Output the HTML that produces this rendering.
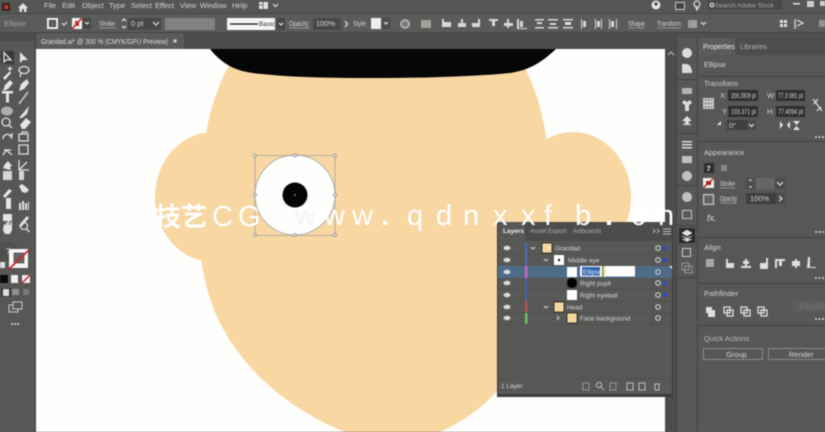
<!DOCTYPE html>
<html><head><meta charset="utf-8"><style>
html,body{margin:0;padding:0;width:825px;height:432px;overflow:hidden;background:#575755}
svg{display:block;position:absolute;left:0;top:0;filter:blur(.45px)}
text{font-family:"Liberation Sans","Noto Sans CJK SC",sans-serif;font-size:7.5px;fill:#d4d4d2}
.w{font-size:29px;fill:#fff}
.d{fill:#2f2f2e}.i{fill:#e2e2e0}.s{fill:none;stroke:#e2e2e0;stroke-width:1.2}
.f{fill:#3f3f3d}
</style></head><body>
<svg width="825" height="432" viewBox="0 0 825 432" xmlns="http://www.w3.org/2000/svg">
<rect width="825" height="432" fill="#575755"/>
<!-- canvas -->
<rect x="36" y="49" width="630" height="383" fill="#fefefd"/>
<g fill="#f8d7a3">
<ellipse cx="213" cy="197" rx="58" ry="65"/><ellipse cx="573" cy="197" rx="58" ry="65"/>
<path d="M238 49C222 75 210 105 205 140C198 190 195 240 205 280C215 330 255 395 345 432L440 432C490 410 520 370 540 320C555 270 555 190 545 130C540 100 530 75 515 49Z"/>
</g>
<path d="M210 49C224 66 237 72 262 74C300 78 340 78 380 78C430 78 480 76 510 73C530 70 542 62 556 49Z" fill="#060606"/>
<!-- eye -->
<circle cx="295" cy="195" r="40" fill="#fefefd" stroke="#9a9aa0" stroke-width=".7"/>
<circle cx="295" cy="195" r="12.5" fill="#050505"/><circle cx="295" cy="195" r="1" fill="#5a7fd0"/>
<rect x="255" y="155.500" width="80" height="80" fill="none" stroke="#9a9aa8" stroke-width=".7"/>
<g fill="#eee" stroke="#8a8a9a" stroke-width=".7"><circle cx="255" cy="155.500" r="1.500"/><circle cx="295" cy="155.500" r="1.500"/><circle cx="335" cy="155.500" r="1.500"/><circle cx="255" cy="195" r="1.500"/><circle cx="335" cy="195" r="1.500"/><circle cx="255" cy="235" r="1.500"/><circle cx="295" cy="235" r="1.500"/><circle cx="335" cy="235" r="1.500"/></g>
<!-- top bars -->
<rect width="825" height="13" fill="#555553"/>
<rect y="13" width="825" height="1" fill="#484846"/>
<rect y="14" width="825" height="19" fill="#5b5b59"/>
<rect y="32" width="825" height="1" fill="#434341"/>
<rect y="33" width="825" height="16" fill="#4c4c4a"/>
<rect x="36" y="33" width="148" height="16" fill="#5b5b59"/>
<rect y="33" width="36" height="399" fill="#575755"/>
<rect x="35" y="33" width="1" height="399" fill="#424240"/>
<rect x="2" y="3" width="8" height="8" fill="#3a2320"/><rect x="4.500" y="5" width="3.500" height="4" fill="#c4372c"/>
<path d="M18 8L23 3L28 8H26.500V12H24V9H22V12H19.500V8Z" class="i"/>
<text x="44" y="8">File</text><text x="62" y="8">Edit</text><text x="82" y="8">Object</text><text x="109" y="8">Type</text><text x="131" y="8">Select</text><text x="155" y="8">Effect</text><text x="180" y="8">View</text><text x="200" y="8">Window</text><text x="232" y="8">Help</text>
<path d="M259 2h9v7h-9z" class="i"/><path d="M263 2v7M259 5h4" stroke="#555" stroke-width=".8"/><path d="M273 4l2.500 2.500L278 4" class="s"/>
<!-- control -->
<text x="4" y="26" style="fill:#a4a4a2">Ellipse</text>
<rect x="47" y="18" width="11" height="11" fill="#eee"/><rect x="49.500" y="20.500" width="6" height="6" fill="#666" stroke="#222" stroke-width=".8"/>
<path d="M62 23l2 2 3-3" class="s"/>
<rect x="72" y="18" width="10" height="11" fill="#eee"/><path d="M72 29L82 18" stroke="#c22" stroke-width="1.600"/><rect x="75" y="21" width="4" height="5" fill="#b33"/>
<rect x="83" y="18" width="8" height="11" fill="#484846"/><path d="M85 22l2 2 2-2" class="s"/>
<text x="99" y="26" textLength="17" lengthAdjust="spacingAndGlyphs">Stroke:</text><path d="M99 28h17" stroke="#ccc" stroke-width=".5"/>
<path d="M122 21l2-2 2 2M122 26l2 2 2-2" class="s"/>
<rect x="128" y="18" width="33" height="12" fill="#484846"/><text x="131" y="26">0 pt</text><path d="M153 22l3 3 3-3" class="s"/>
<rect x="165" y="18" width="50" height="12" fill="#828280"/>
<rect x="227" y="18" width="48" height="12" fill="#f5f5f3"/><path d="M230 24h28" stroke="#111" stroke-width="1.300"/><text x="259" y="26" style="fill:#333;font-size:6.500px">Basic</text>
<rect x="277" y="18" width="8" height="12" fill="#484846"/><path d="M279 23l2 2 2-2" class="s"/>
<text x="289" y="26" textLength="21" lengthAdjust="spacingAndGlyphs">Opacity:</text><path d="M289 28h21" stroke="#ccc" stroke-width=".5"/>
<rect x="313" y="18" width="28" height="12" fill="#484846"/><text x="316" y="26">100%</text><path d="M345 21l2.500 3-2.500 3" class="s"/>
<text x="353" y="26" textLength="14" lengthAdjust="spacingAndGlyphs">Style:</text>
<rect x="371" y="18" width="10" height="11" fill="#eee"/><rect x="382" y="18" width="8" height="11" fill="#4b4b49"/><path d="M384 22l2 2 2-2" class="s"/>
<circle cx="405" cy="24" r="5" fill="#aaa"/><circle cx="405" cy="24" r="2.800" fill="#777"/>
<g fill="#d8d8d6"><rect x="421" y="20" width="10" height="8" opacity=".55"/>
<path d="M442 19h2v3h7v5h-9zM458 23h3v-4h2v4h3v4h-8zM472 23h6v-4h2v8h-8z"/>
<path d="M489 19h9v2h-3v5h-3v-5h-3zM504 23h3v-4h2v4h4v3h-4v2h-2v-2h-3zM517 19h2v9h8v1h-10zM520 21h3v6h-3z"/>
<path d="M535 19h9v1.500h-9zM537 22h5v2h-5zM535 27h9v1.500h-9zM548 19h10v1.500h-10zM550 23h6v2h-6zM548 27h10v1.500h-10zM563 19h10v1.500h-10zM565 22h6v3h-6zM563 27h10v1.500h-10z"/>
<path d="M581 19h1v10h-1zM583 21h3v6h-3zM595 19h1v10h-1zM597 21h3v6h-3zM601 19h1v10h-1zM609 19h1v10h-1zM611 21h3v6h-3zM616 19h1v10h-1z"/></g>
<text x="628" y="26" textLength="17" lengthAdjust="spacingAndGlyphs">Shape</text><path d="M628 28h17" stroke="#ccc" stroke-width=".5"/>
<text x="657" y="26" textLength="24" lengthAdjust="spacingAndGlyphs">Transform</text><path d="M657 28h24" stroke="#ccc" stroke-width=".5"/>
<rect x="688" y="20" width="9" height="8" fill="#bbb" opacity=".7"/><path d="M701 22l2.500 2.500 2.500-2.500" class="s"/>
<rect x="780" y="20" width="7" height="7" fill="#e2e2e0"/><path d="M783.500 20v7M780 23.500h7" stroke="#555"/>
<path d="M795 19v10M797 20l6 3-6 3" class="s"/><rect x="819" y="20" width="6" height="7" fill="#bbb" opacity=".6"/>
<!-- top right -->
<circle cx="656" cy="5" r="4.500" class="i"/><circle cx="656" cy="4" r="1.700" fill="#555"/>
<rect x="675.500" y="2.500" width="9" height="7" fill="#444" stroke="#ccc"/>
<circle cx="697" cy="4" r="3" class="s"/><path d="M695.500 7l1.500 3 1.500-3" class="s"/>
<rect x="708" y="0" width="74" height="9.500" fill="#484846"/><text x="715" y="7.500" style="font-size:6.500px;fill:#a8a8a6">Search Adobe Stock</text><circle cx="712" cy="5" r="1.800" class="s"/>
<rect x="793" y="3" width="7" height="1.500" class="i"/><rect x="807" y="1" width="7" height="6" fill="#ccc"/><rect x="820" y="1" width="5" height="5" fill="#ccc"/>
<text x="41" y="44" textLength="127" lengthAdjust="spacingAndGlyphs" style="fill:#dededc">Grandad.ai* @ 300 % (CMYK/GPU Preview)</text><path d="M173.500 39.500l3 3M176.500 39.500l-3 3" class="s"/>
<!-- right side -->
<rect x="665" y="49" width="11" height="383" fill="#4d4d4b"/>
<path d="M668 55l3-3 3 3" class="s" style="stroke-width:.8"/>
<rect x="676" y="33" width="149" height="399" fill="#575755"/>
<rect x="676" y="33" width="149" height="5" fill="#4f4f4d"/>
<rect x="697" y="38" width="1" height="394" fill="#434341"/><rect x="676" y="38" width="1" height="394" fill="#434341"/>
<rect x="698" y="38" width="127" height="17" fill="#4d4d4b"/><rect x="698" y="38" width="37" height="17" fill="#5b5b59"/>
<text x="703" y="49" style="fill:#efefed;font-size:7px">Properties</text><text x="740" y="49" style="font-size:7px;fill:#b5b5b3">Libraries</text>
<text x="704" y="67">Ellipse</text>
<g fill="#414140"><rect x="698" y="76" width="127" height="1"/><rect x="698" y="141" width="127" height="1"/><rect x="698" y="237" width="127" height="1"/><rect x="698" y="283" width="127" height="1"/><rect x="698" y="325" width="127" height="1"/>
<rect x="677" y="79" width="20" height="1"/><rect x="677" y="133" width="20" height="1"/><rect x="677" y="185" width="20" height="1"/><rect x="677" y="225" width="20" height="1"/><rect x="677" y="277" width="20" height="1"/></g>
<text x="704" y="86">Transform</text>
<rect x="703" y="98" width="11" height="11" fill="#c4c4c2"/><path d="M705 100h7M705 103.500h7M705 107h7" stroke="#555" stroke-dasharray="1.500 1.500"/>
<text x="720" y="98">X:</text><text x="722" y="114">Y:</text><text x="767" y="98">W:</text><text x="767" y="114">H:</text>
<rect x="728" y="90" width="30" height="11" class="d"/><rect x="728" y="106" width="30" height="11" class="d"/><rect x="776" y="90" width="29" height="11" class="d"/><rect x="776" y="106" width="29" height="11" class="d"/>
<text x="731" y="98" textLength="25" lengthAdjust="spacingAndGlyphs">358.2809 pt</text><text x="731" y="114" textLength="25" lengthAdjust="spacingAndGlyphs">103.371 pt</text><text x="778" y="98" textLength="25" lengthAdjust="spacingAndGlyphs">77.3 081 pt</text><text x="778" y="114" textLength="25" lengthAdjust="spacingAndGlyphs">77.4094 pt</text>
<path d="M813 99l9 12M814 104l4-5M817 111l4-4" class="s"/>
<path d="M717 125l4-4v4z" class="i"/><rect x="727" y="120" width="20" height="10" class="f"/><text x="729" y="128">0°</text><rect x="747" y="120" width="9" height="10" fill="#4b4b49"/><path d="M749 124l2.500 2.500 2.500-2.500" class="s"/>
<path d="M780 121v8l3-4zM790 121v8l-3-4zM793 121h7l-3.500 4zM793 130h7l-3.500-4z" class="i"/>
<text x="704" y="155">Appearance</text>
<rect x="704" y="163" width="10" height="10" fill="#2e2e2d"/><text x="706.500" y="171" style="fill:#eee;font-weight:700">7</text><rect x="721" y="165" width="6" height="6" fill="#888"/>
<rect x="703" y="178" width="11" height="10" fill="#eee"/><path d="M703 188L714 178" stroke="#c22" stroke-width="1.500"/><rect x="706" y="181" width="5" height="4" fill="#a22"/>
<text x="720" y="186" textLength="15" lengthAdjust="spacingAndGlyphs">Stroke</text><path d="M720 188h15" stroke="#ccc" stroke-width=".5"/>
<rect x="746" y="178" width="9" height="11" fill="#4b4b49"/><path d="M749 181l1.500-1.500 1.500 1.500M749 186l1.500 1.500 1.500-1.500" class="s" style="stroke-width:.8"/><rect x="756" y="178" width="19" height="11" fill="#666664"/><rect x="775" y="178" width="10" height="11" fill="#4b4b49"/><path d="M777 182l3 3 3-3" class="s"/>
<rect x="703.500" y="194.500" width="10" height="10" fill="#777" stroke="#ccc"/><rect x="706" y="197" width="5" height="5" fill="#666" stroke="#444" stroke-width=".6"/>
<text x="720" y="201" textLength="17" lengthAdjust="spacingAndGlyphs">Opacity</text><path d="M720 203h17" stroke="#ccc" stroke-width=".5"/>
<rect x="746" y="193" width="30" height="11" class="f"/><text x="750" y="201">100%</text><rect x="776" y="193" width="9" height="11" fill="#4b4b49"/><path d="M779 196l3 2.500-3 2.500" class="s"/>
<text x="707" y="221" style="font-style:italic;font-size:9px;fill:#ddd">fx.</text>
<g fill="#d8d8d6"><circle cx="816" cy="137" r="1"/><circle cx="819.500" cy="137" r="1"/><circle cx="823" cy="137" r="1"/><circle cx="816" cy="232" r="1"/><circle cx="819.500" cy="232" r="1"/><circle cx="823" cy="232" r="1"/><circle cx="816" cy="278" r="1"/><circle cx="819.500" cy="278" r="1"/><circle cx="823" cy="278" r="1"/><circle cx="816" cy="319" r="1"/><circle cx="819.500" cy="319" r="1"/><circle cx="823" cy="319" r="1"/></g>
<text x="704" y="250" style="font-style:italic">Align</text>
<g fill="#dededc"><rect x="706" y="259" width="8" height="8" opacity=".6"/><path d="M726 259h2v4h6v5h-8zM743 261h2v-2h2v2h2v3h-2v2h4v2h-10v-2h4v-2h-2v-2zM760 263h6v-5h2v11h-8zM775 259h10v2h-3v5h-3v-5h-2v7h-2zM792 261h3v-2h2v2h3v5h-3v2h-2v-2h-3zM808 257h2v10h6v1h-9z"/></g>
<text x="704" y="296">Pathfinder</text>
<g fill="#dededc"><path d="M706 307h6v3h3v7h-7v-4h-2z"/></g>
<g fill="none" stroke="#dededc" stroke-width="1.300"><rect x="724" y="307" width="6" height="6"/><rect x="727" y="310" width="6" height="6"/><rect x="741" y="307" width="6" height="6"/><rect x="744" y="310" width="6" height="6"/><rect x="758" y="307" width="6" height="6"/><rect x="761" y="310" width="6" height="6"/></g>
<rect x="792" y="301" width="33" height="11" fill="#5e5e5c"/><text x="799" y="309" style="fill:#777775">Expand</text>
<text x="704" y="341" style="fill:#bdbdbb">Quick Actions</text>
<rect x="703.500" y="348.500" width="59" height="11" fill="none" stroke="#8a8a88"/><text x="726" y="357">Group</text>
<rect x="768.500" y="348.500" width="60" height="11" fill="none" stroke="#8a8a88"/><text x="789" y="357">Render</text>
<!-- icon col -->
<g fill="#dcdcda"><circle cx="687" cy="53" r="5"/><path d="M682 64h4c4 0 6 4 6 9h-10z"/><rect x="682" y="88" width="10" height="6" opacity=".7"/><path d="M684 100l3 2 3-2 2 3-3 2v6h-4v-6l-3-2zM687 116l5 5h-3v3h2v1h-8v-1h2v-3h-3z"/><rect x="682" y="141" width="10" height="1.500"/><rect x="682" y="144" width="10" height="1.500"/><rect x="682" y="147" width="10" height="1.500"/><rect x="682" y="156" width="10" height="7" opacity=".8"/><circle cx="687" cy="176" r="5" opacity=".8"/><circle cx="687" cy="197" r="5" opacity=".8"/></g>
<rect x="682.500" y="210.500" width="9" height="8" fill="none" stroke="#ccc"/>
<rect x="679" y="228" width="16" height="15" fill="#2b2b2a"/><path d="M687 230l5 3-5 3-5-3zM682 236l5 3 5-3-5 2zM682 239l5 2.500 5-2.500" class="i" stroke="#e8e8e6" stroke-width=".5"/>
<rect x="682.500" y="248.500" width="8" height="8" fill="none" stroke="#ccc"/><rect x="682" y="263" width="7" height="7" fill="none" stroke="#999"/><rect x="685" y="266" width="7" height="7" fill="none" stroke="#999"/>
<!-- tools -->
<rect x="0" y="33" width="35" height="8" fill="#4c4c4a"/>
<rect x="1" y="51" width="13" height="13" fill="#393937"/>
<g fill="#e4e4e2">
<path d="M20 52V63L23 60L28 60Z"/>
<path d="M10 71l1 2-6 7-2-2zM10 66l1 2 2 .5-2 1-1 2-1-2-2-1 2-.5z"/>
<path d="M3 91L5 85L10 80L13 83L8 89Z"/><path d="M19 91L21 84L27 79L29 83L24 89Z"/>
<path d="M2 91h11v2.500h-4v9h-3v-9h-4z"/>
<path d="M19 118L29 106L27 114L22 118Z"/>
<path d="M20 125L26 118L31 122L25 129H22Z"/>
<path d="M3 155l3-4h5l1 4-3 2zM20 156V145l4 3h4v8z" opacity="0"/>
<path d="M3 168l2-4 3-3 4 5-2 1 1 3-5-1z"/>
<path d="M4 186V172h9v8h-4v6z" opacity="0"/>
<path d="M3 180v-9h9v9z" opacity=".85"/><path d="M19 171h5v9h-5z" opacity=".9"/>
<path d="M3 196l6-7 3 2-7 7zM19 186l3-2 4 3 3 3-3 3-4-1z"/>
<path d="M6 198h5v11H6zM19 210v-7h2v7zM22 210v-9h2v9zM25 210v-7h2v7zM28 210v-8h1v8z"/>
<path d="M3 214h9v7H3zM20 224l7-8 2 2-7 8-3 1z"/>
<path d="M3 230l1-6 2 1V222h1.500v3H8v-4h1.500v4h1v-3H12v8l-2 4H5z"/>
</g>
<ellipse cx="7" cy="111" rx="6" ry="4.500" fill="#b0b0ae"/>
<g fill="none" stroke="#e0e0de" stroke-width="1.300">
<path d="M4 52.500V62L7 59.500L11 60Z"/>
<ellipse cx="24" cy="70" rx="5" ry="3.500"/><path d="M21 73l-1 4"/>
<path d="M19 104L28 92" />
<circle cx="6" cy="122" r="4"/><path d="M9 125l3 3"/>
<path d="M3 139a4.500 4.500 0 0 1 8-3l1 3M12 133v3h-3"/>
<path d="M19 134h9v7h-9zM22 134v-2h6"/>
<path d="M19 145h9v9h-9z"/><path d="M4 150h7M3 155l3-5 6 5"/>
<path d="M19 160v10h10M19 170l8-8"/>
<path d="M4 176h8M4 173v7M8 173v7"/>
<circle cx="24" cy="226" r="3.500" transform="translate(0 0)"/><path d="M26.500 229l3 3"/>
</g>
<rect x="0" y="243" width="17" height="18" fill="#4f4f4d"/><text x="6" y="254" style="font-size:8px;fill:#e8e8e6">?</text>
<rect x="9" y="249" width="19" height="19" fill="#f5f5f3"/><rect x="14" y="253" width="10" height="10" fill="#666" stroke="#222" stroke-width=".5"/>
<path d="M8 270L29 250" stroke="#c42b2b" stroke-width="1.800"/>
<rect x="0" y="262" width="5" height="6" fill="#ddd"/>
<rect x="0" y="275" width="8" height="8" fill="#0a0a0a"/><rect x="11" y="275" width="7" height="8" fill="#eee"/><rect x="22" y="275" width="8" height="8" fill="#eee"/><path d="M22 283L30 275" stroke="#c22" stroke-width="1.500"/>
<rect x="1" y="288" width="10" height="9" fill="#3a3a38"/><rect x="3" y="289" width="6" height="7" fill="#ddd"/><rect x="12" y="289" width="7" height="6" fill="#aaa" opacity=".7"/><rect x="23" y="289" width="6" height="6" fill="#777"/>
<rect x="9" y="305" width="9" height="7" fill="none" stroke="#ccc"/><rect x="13" y="302" width="9" height="7" fill="#575755" stroke="#ccc"/>
<g fill="#ddd"><circle cx="12" cy="324" r="1"/><circle cx="15" cy="324" r="1"/><circle cx="18" cy="324" r="1"/></g>
<!-- layers panel -->
<rect x="497" y="222" width="176" height="175" fill="#3c3c3a"/>
<rect x="498" y="222" width="174" height="172" fill="#585856"/>
<rect x="498" y="222" width="174" height="19" fill="#4c4c4a"/><rect x="498" y="222" width="27" height="19" fill="#585856"/>
<text x="503" y="233" style="font-size:6.500px;fill:#ececea;font-weight:700">Layers</text><text x="530" y="233" style="font-size:6.500px;fill:#b0b0ae">Asset Export</text><text x="573" y="233" style="font-size:6.500px;fill:#b0b0ae">Artboards</text>
<path d="M653 229l2 2-2 2M657 229l2 2-2 2" class="s" style="stroke-width:.7"/><path d="M663 229h8M663 231.500h8M663 234h8" stroke="#ddd" stroke-width=".8"/>
<g fill="#4f4f4d"><rect x="498" y="254" width="174" height=".8"/><rect x="498" y="277.500" width="174" height=".8"/><rect x="498" y="289" width="174" height=".8"/><rect x="498" y="301" width="174" height=".8"/><rect x="498" y="312.500" width="174" height=".8"/><rect x="498" y="324" width="174" height=".8"/><rect x="498" y="378" width="174" height=".8"/><rect x="652" y="241" width=".8" height="83"/></g>
<path d="M498 266H672V278H498Z" fill="#4f6b88"/><path d="M669 266h3v3z" fill="#eee"/>
<g fill="#dcdcda"><ellipse cx="507" cy="248" rx="3.500" ry="2.200"/><ellipse cx="507" cy="260" rx="3.500" ry="2.200"/><ellipse cx="507" cy="272" rx="3.500" ry="2.200"/><ellipse cx="507" cy="283" rx="3.500" ry="2.200"/><ellipse cx="507" cy="295" rx="3.500" ry="2.200"/><ellipse cx="507" cy="307" rx="3.500" ry="2.200"/><ellipse cx="507" cy="318" rx="3.500" ry="2.200"/></g>
<rect x="525" y="243" width="2" height="23" fill="#4a6fb5"/><rect x="525" y="266" width="2.500" height="12" fill="#c86ab8"/><rect x="525" y="278" width="2" height="23" fill="#4563a8"/><rect x="525" y="301" width="2.500" height="11" fill="#b5544a"/><rect x="525" y="313" width="2.500" height="11" fill="#66c36a"/>
<path d="M531 247l2 2 2-2M544 259l2 2 2-2M544 306l2 2 2-2M557 316l2 2-2 2" class="s" style="stroke-width:.9"/>
<rect x="542" y="243" width="10" height="10" fill="#f6d79e" stroke="#222" stroke-width=".8"/>
<rect x="554" y="255" width="10" height="10" fill="#fff"/><circle cx="559" cy="260" r="1.200" fill="#111"/>
<rect x="567" y="267" width="10" height="10" fill="#fff"/>
<rect x="567" y="278" width="10" height="10" fill="#444"/><circle cx="572" cy="283" r="5" fill="#000"/>
<rect x="567" y="290" width="10" height="10" fill="#fff"/>
<rect x="554" y="302" width="10" height="10" fill="#f6d79e" stroke="#222" stroke-width=".8"/>
<rect x="567" y="313" width="10" height="10" fill="#f6d79e" stroke="#222" stroke-width=".8"/>
<text x="555" y="250.500" style="font-size:6.500px">Grandad</text><text x="568" y="262.500" style="font-size:6.500px">Middle eye</text><text x="580" y="285.500" style="font-size:6.500px">Right pupil</text><text x="580" y="297.500" style="font-size:6.500px">Right eyeball</text><text x="567" y="309.500" style="font-size:6.500px">Head</text><text x="580" y="320.500" style="font-size:6.500px">Face background</text>
<rect x="580" y="266" width="55" height="10.500" fill="#fff"/><rect x="582" y="267" width="18" height="8.500" fill="#2e66ad"/><text x="583" y="274" style="font-size:6.500px;fill:#eef">Ellipse</text><rect x="601" y="266" width="5" height="11" fill="#f6ee9c" opacity=".8"/><path d="M603 266v11" stroke="#333" stroke-width=".8"/>
<g fill="none" stroke="#dcdcda" stroke-width="1"><circle cx="658" cy="248" r="2.300"/><circle cx="658" cy="260" r="2.300"/><circle cx="658" cy="272" r="2.300"/><circle cx="658" cy="283" r="2.300"/><circle cx="658" cy="295" r="2.300"/><circle cx="658" cy="307" r="2.300"/><circle cx="658" cy="318" r="2.300"/></g>
<g fill="#2a4dc0"><rect x="663" y="246" width="4" height="4" rx="1"/><rect x="663" y="258" width="4" height="4" rx="1"/><rect x="663" y="281" width="4" height="4" rx="1"/><rect x="663" y="293" width="4" height="4" rx="1"/></g>
<text x="501" y="388" style="font-size:6.500px">1 Layer</text>
<g fill="none" stroke="#bdbdbb" stroke-width="1"><rect x="583" y="383" width="6" height="7" opacity=".6"/><circle cx="599" cy="385" r="2.600"/><path d="M601 387l3 3"/><rect x="610" y="383" width="6" height="7" opacity=".6"/><rect x="627" y="383" width="6" height="7"/><rect x="639" y="383" width="6" height="7"/><path d="M654 384h6M655 384v6h4v-6"/></g>
<!-- watermark -->
<text x="155" y="226" style="font-size:26px;fill:#fff;font-weight:700;font-family:'Noto Sans CJK SC','WenQuanYi Zen Hei',sans-serif">技艺</text>
<text class="w" x="212" y="226">C</text><text class="w" x="238" y="226">G</text>
<text class="w" x="295" y="225" style="fill:#f4f4fa">w</text><text class="w" x="324" y="225">w</text><text class="w" x="352" y="225">w</text><text class="w" x="381" y="225" style="font-weight:700">.</text><text class="w" x="407" y="225">q</text><text class="w" x="436" y="225">d</text><text class="w" x="463" y="225">n</text><text class="w" x="493" y="225">x</text><text class="w" x="521" y="225">x</text><text class="w" x="544" y="225">f</text><text class="w" x="575" y="225">b</text><text class="w" x="605" y="225" style="font-weight:700">.</text><text class="w" x="631" y="225">c</text><text class="w" x="658" y="225">n</text>
</svg>
</body></html>
